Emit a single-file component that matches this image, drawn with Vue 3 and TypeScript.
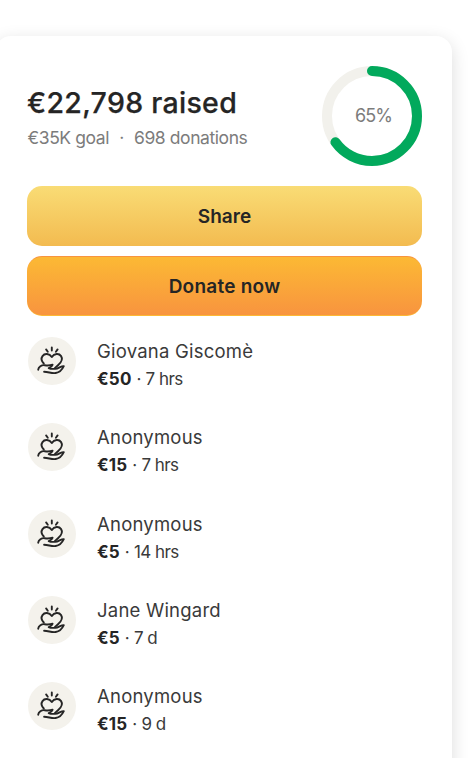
<script setup lang="ts">
interface Donation {
  name: string
  amount: string
  time: string
}

const percent = 65
const radius = 45
const circumference = 2 * Math.PI * radius
const dash = `${(circumference * percent) / 100} ${circumference}`

const donations: Donation[] = [
  { name: 'Giovana Giscomè', amount: '€50', time: '7 hrs' },
  { name: 'Anonymous', amount: '€15', time: '7 hrs' },
  { name: 'Anonymous', amount: '€5', time: '14 hrs' },
  { name: 'Jane Wingard', amount: '€5', time: '7 d' },
  { name: 'Anonymous', amount: '€15', time: '9 d' },
]
</script>

<template>
  <main class="page">
    <section class="card">
      <header class="summary">
        <div class="totals">
          <h1 class="raised">€22,798 raised</h1>
          <p class="goal"><span>€35K goal</span><span class="sep">·</span><span class="count">698 donations</span></p>
        </div>
        <div class="progress">
          <svg class="ring" viewBox="0 0 100 100" fill="none" stroke-width="10">
            <circle cx="50" cy="50" :r="radius" stroke="#f2f1ec" />
            <circle cx="50" cy="50" :r="radius" stroke="#02a95c" stroke-linecap="round" :stroke-dasharray="dash" transform="rotate(-90 50 50)" />
          </svg>
          <span class="percent">{{ percent }}%</span>
        </div>
      </header>

      <div class="actions">
        <button class="button share">Share</button>
        <button class="button donate">Donate now</button>
      </div>

      <ul class="donations">
        <li v-for="(donation, i) in donations" :key="i" class="donation">
          <svg class="avatar" viewBox="0 0 48 48" fill="none" stroke="#252525" stroke-width="1.9" stroke-linecap="round" stroke-linejoin="round">
            <circle cx="24" cy="24" r="24" fill="#f4f2ec" stroke="none" />
            <path d="M23.8 10.4v3.2M18.1 12.4l1.7 2.3M29.6 12.4l-1.7 2.3" />
            <path d="M15.8 26.5C13.7 24.3 13 21.2 14.5 19.1c2.1-3 6.8-2.8 9.3 1 2.5-3.8 7.2-4 9.3-1 2 3-.1 6.5-3.1 9.2l-3.2 2.8" />
            <path d="M10.2 32.7c.3-2.8 3.4-4.9 6.5-4.5 2.5.4 5.1.4 7.9-.5-.5 1.8-2.2 2.8-3.9 3.4 1.8 1 4.4.7 6.6.8 3.2-.1 5.7-3 8.5-2.8-1.5 3.2-4.4 6.3-8.1 6.9-4 .6-7.3-1.2-11.6-1.2" />
          </svg>
          <div class="details">
            <span class="name">{{ donation.name }}</span>
            <span class="meta"><b>{{ donation.amount }}</b><span class="dot">·</span><span>{{ donation.time }}</span></span>
          </div>
        </li>
      </ul>
    </section>
  </main>
</template>

<style>
body {
  background: #fff;
  overflow: hidden;
}
</style>

<style scoped>
.page {
  height: 758px;
  overflow: hidden;
  box-sizing: border-box;
  padding-top: 36px;
  font-family: Inter, "Liberation Sans", sans-serif;
  color: #252525;
}
.card {
  box-sizing: border-box;
  width: 457px;
  height: 800px;
  margin-left: -5px;
  padding: 30px 30px 0 32px;
  border-radius: 16px;
  background: #fff;
  box-shadow: 0 5px 18px rgba(0, 0, 0, 0.14);
}
.summary {
  display: flex;
  justify-content: space-between;
  height: 100px;
}
.totals {
  padding-top: 17px;
  white-space: nowrap;
}
.raised {
  margin: 0;
  font-size: 28.5px;
  line-height: 40px;
  font-weight: 500;
  letter-spacing: 0.3px;
  -webkit-text-stroke: 0.25px currentColor;
}
.goal {
  display: flex;
  margin: 0;
  padding-left: 0.5px;
  font-size: 17.5px;
  line-height: 30px;
  font-weight: 400;
  letter-spacing: -0.42px;
  color: #7c7c7c;
}
.sep {
  width: 25px;
  text-align: center;
}
.progress {
  display: grid;
  width: 100px;
  height: 100px;
  place-items: center;
}
.ring,
.percent {
  grid-area: 1 / 1;
}
.ring {
  width: 100px;
  height: 100px;
}
.percent {
  padding-left: 3px;
  padding-bottom: 2px;
  font-size: 18px;
  font-weight: 400;
  letter-spacing: -1px;
  color: #7c7c7c;
}
.actions {
  display: grid;
  gap: 10px;
  margin-top: 20px;
}
.button {
  height: 60px;
  padding: 2px 0 0;
  border: 0;
  border-radius: 15px;
  font: 600 19px/58px Inter, "Liberation Sans", sans-serif;
  letter-spacing: 0;
  color: #252525;
}
.share {
  background: linear-gradient(#f9dc75, #f3bb50);
}
.donate {
  border: solid transparent;
  border-width: 1px 0;
  line-height: 56px;
  letter-spacing: 0.25px;
  background: linear-gradient(#fcb934, #f8943f) padding-box, linear-gradient(#f8943f 50%, #fcb934 50%) border-box;
}
.donations {
  display: grid;
  grid-auto-rows: 86.25px;
  margin: 21px 0 0;
  padding: 0;
  list-style: none;
}
.donation {
  display: flex;
  align-items: flex-start;
  gap: 21px;
  padding-left: 1px;
}
.avatar {
  width: 48px;
  height: 48px;
}
.details {
  display: flex;
  flex-direction: column;
}
.name {
  font-size: 18.5px;
  line-height: 28px;
  font-weight: 400;
  letter-spacing: 0.22px;
  color: #3a3a3a;
}
.meta {
  display: flex;
  font-size: 17px;
  line-height: 28px;
  font-weight: 400;
  letter-spacing: -0.55px;
  color: #3a3a3a;
}
.meta b {
  font-weight: 700;
  letter-spacing: 0.2px;
  color: #252525;
}
.dot {
  width: 14px;
  text-align: center;
}
</style>
